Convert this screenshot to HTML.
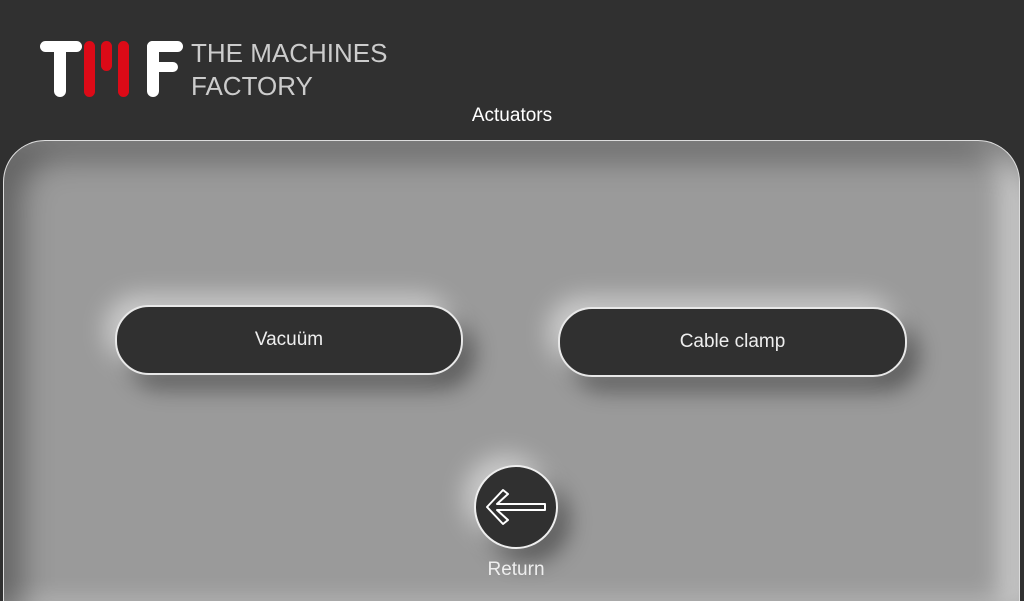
<!DOCTYPE html>
<html><head><style>
html,body{margin:0;width:1024px;height:601px;overflow:hidden}
body{background:#303030;font-family:"Liberation Sans",sans-serif;position:relative}
.panel{position:absolute;left:3px;top:140px;width:1017px;height:461px;border:1px solid #ddd;border-bottom:none;border-radius:42px 42px 0 0;background:#9a9a9a;box-sizing:border-box;box-shadow:inset 18px 18px 30px rgba(0,0,0,.35),inset -20px 0 25px rgba(255,255,255,.45);}
.btn{position:absolute;height:66px;background:#303030;border:2px solid #e8e8e8;border-radius:34px;color:#eee;font-size:19px;display:flex;align-items:center;justify-content:center;box-shadow:-10px -10px 25px rgba(255,255,255,.5),12px 14px 22px rgba(0,0,0,.4)}
.circ{position:absolute;left:474px;top:465px;width:80px;height:80px;border-radius:50%;background:#303030;border:2px solid #eee;box-shadow:-10px -10px 25px rgba(255,255,255,.5),12px 14px 22px rgba(0,0,0,.4)}
.t{position:absolute;color:#fff}
.w{position:absolute;background:#fff;border-radius:6px}.r{position:absolute;background:#dc0a17;border-radius:6px}
</style></head><body>
<div class="w" style="left:40px;top:41px;width:42px;height:11px"></div>
<div class="w" style="left:54px;top:41px;width:12px;height:56px"></div>
<div class="r" style="left:84px;top:41px;width:11px;height:56px"></div>
<div class="r" style="left:101px;top:41px;width:11px;height:30px"></div>
<div class="r" style="left:118px;top:41px;width:11px;height:56px"></div>
<div class="w" style="left:147px;top:41px;width:12px;height:56px"></div>
<div class="w" style="left:147px;top:41px;width:36px;height:11px"></div>
<div class="w" style="left:147px;top:62px;width:31px;height:10px"></div>
<div class="t" style="left:191px;top:37px;font-size:26px;line-height:33px;color:#ccc">THE MACHINES<br>FACTORY</div>
<div class="t" style="left:0;width:1024px;text-align:center;top:105px;font-size:19px">Actuators</div>
<div class="panel"></div>
<div class="btn" style="left:115px;top:305px;width:344px">Vacuüm</div>
<div class="btn" style="left:558px;top:307px;width:345px">Cable clamp</div>
<div class="circ"><svg width="80" height="80" viewBox="0 0 80 80"><path d="M11 40 L27 23 L32 27 L21 37 L69 37 L69 43 L21 43 L32 53 L27 57 Z" fill="none" stroke="#fff" stroke-width="2" stroke-linejoin="round"/></svg></div>
<div class="t" style="left:466px;width:100px;text-align:center;top:559px;font-size:19px;color:#eee">Return</div>
</body></html>
